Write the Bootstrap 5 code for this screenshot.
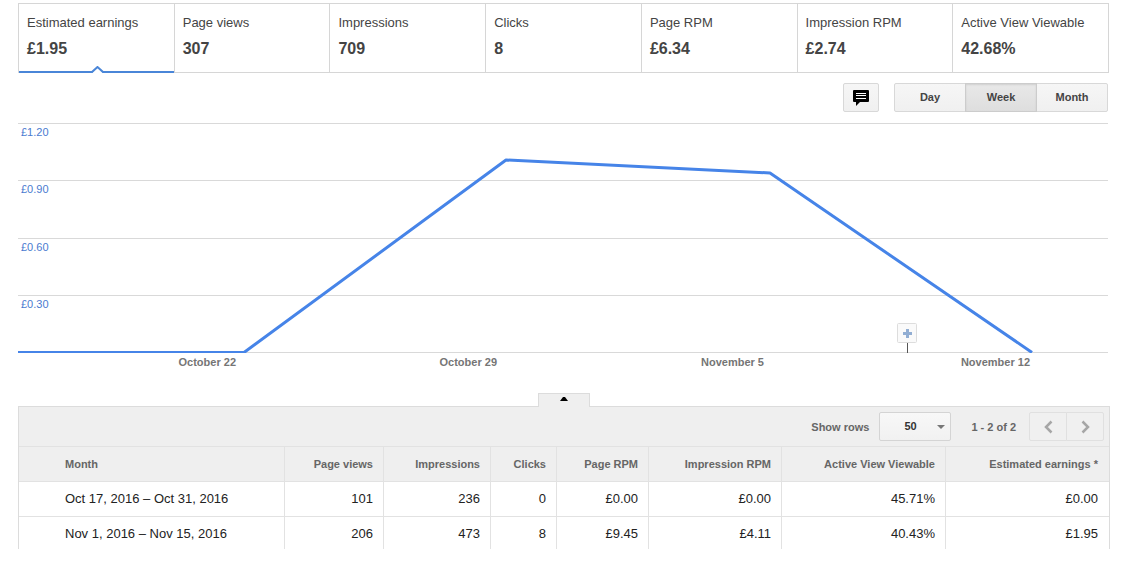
<!DOCTYPE html>
<html lang="en">
<head>
<meta charset="utf-8">
<meta name="viewport" content="width=device-width, initial-scale=1">
<title>Earnings report</title>
<link href="https://cdn.jsdelivr.net/npm/bootstrap@5.3.0/dist/css/bootstrap.min.css" rel="stylesheet">
<style>
  body { font-family: "Liberation Sans", Arial, sans-serif; font-size: 13px; line-height: 16px; color: #444; background: #fff; }
  .report { padding: 3px 16px 0 18px; }

  .metrics { border: 1px solid #d6d6d6; margin-right: 1px; }
  .metric { flex: 1 1 0; height: 68px; padding: 11px 8px 0; color: #444; text-decoration: none; position: relative; }
  .metric + .metric { border-left: 1px solid #d6d6d6; }
  .metric-value { font-size: 16px; line-height: 20px; font-weight: bold; margin-top: 8px; }
  .metric-active::after { content: ""; position: absolute; left: 0; right: 0; bottom: -1px; height: 2px; background: #4a86d8; }
  .metric-notch { position: absolute; left: 50%; bottom: -1px; margin-left: -5px; z-index: 1; }

  .chart-tools { gap: 15px; margin: 10px 2px 11px 0; }
  .tool-btn { height: 29px; padding: 0 0 1px; border: 1px solid #d8d8d8; border-radius: 2px; background: linear-gradient(#f6f6f6, #f0f0f0); color: #444; font-size: 11px; line-height: 16px; font-weight: bold; }
  .tool-btn:hover { background: #f0f0f0; border-color: #c6c6c6; }
  .note-btn { width: 36px; padding: 0; }
  .period .tool-btn { width: 72px; }
  .period .tool-btn.active { background: linear-gradient(#e8e8e8, #dedede); border-color: #ccc; color: #444; box-shadow: inset 0 1px 2px rgba(0,0,0,.1); }

  .chart { margin-right: 2px; }
  .plot { height: 230px; border-bottom: 1px solid #d9d9d9; }
  .band { flex: 1 1 0; border-top: 1px solid #d9d9d9; padding-left: 3px; color: #4a7bd0; font-size: 11px; line-height: 16px; }
  .series { position: absolute; left: 0; top: 0; width: 100%; height: 230px; overflow: hidden; }
  .annot { position: absolute; bottom: -1px; margin-left: -10px; padding: 0; border: 0; background: none; line-height: 0; }
  .dates { display: grid; grid-template-columns: 218fr 261fr 267fr 266fr 78fr; text-align: right; font-size: 11px; line-height: 16px; font-weight: bold; color: #757575; padding-top: 1px; }

  .fold { width: 52px; height: 14px; margin: 23px auto -1px; padding: 3px 0 0; border: 1px solid #dcdcdc; border-bottom: 0; background: #efefef; position: relative; }
  .panel-bar { height: 40px; background: #efefef; border: 1px solid #dcdcdc; border-bottom: 0; padding: 0 5px 0 0; font-size: 11px; font-weight: bold; color: #666; }
  .rows-pick { width: 72px; height: 29px; margin: 0 20px 0 10px; padding: 0 0 1px 24px; border: 1px solid #d4d4d4; border-radius: 2px; font-size: 11px; line-height: 16px; font-weight: bold; color: #333; appearance: none;
    background: url("data:image/svg+xml,%3Csvg xmlns='http://www.w3.org/2000/svg' width='8' height='4'%3E%3Cpath d='M0 0h8L4 4z' fill='%23777'/%3E%3C/svg%3E") no-repeat right 5px center, linear-gradient(#f8f8f8, #f1f1f1); }
  .pager { margin-left: 13px; }
  .pager .btn { width: 38px; height: 29px; padding: 0; border: 1px solid #e0e0e0; border-radius: 2px; background: #f0f0f0; line-height: 0; }

  .earnings { table-layout: fixed; margin: 0; border-left: 1px solid #dcdcdc; border-right: 1px solid #dcdcdc; border-collapse: separate; border-spacing: 0; color: #222; }
  .earnings th, .earnings td { padding: 9px 10px; line-height: 16px; height: 35px; text-align: right; border: 0 solid #e2e2e2; border-top-width: 1px; border-right-width: 1px; white-space: nowrap; background: none; }
  .earnings thead th { background: #efefef; font-size: 11px; color: #666; }
  .earnings tr > :first-child { text-align: left; padding-left: 46px; font-weight: normal; }
  .earnings thead tr > :first-child { font-weight: bold; }
  .earnings tr > :last-child { border-right-width: 0; padding-right: 11px; }
  .earnings tbody tr:last-child > * { height: 33px; padding-bottom: 7px; }
  .c-month { width: 266px; } .c-views { width: 99px; } .c-impr { width: 107px; } .c-clicks { width: 66px; }
  .c-rpm { width: 92px; } .c-irpm { width: 133px; } .c-view { width: 164px; } .c-earn { width: 163px; }
</style>
</head>
<body>
<main class="report">
  <nav class="metrics d-flex" aria-label="Metrics">
    <a href="#" class="metric metric-active"><div>Estimated earnings</div><div class="metric-value">£1.95</div>
      <svg class="metric-notch" width="13" height="7" viewBox="0 0 13 7"><path d="M1 7 6.500 1 12 7z" fill="#fff"/><path d="M.5 6.500 6.500 1l6 5.500" fill="none" stroke="#4a86d8" stroke-width="2"/></svg></a>
    <a href="#" class="metric"><div>Page views</div><div class="metric-value">307</div></a>
    <a href="#" class="metric"><div>Impressions</div><div class="metric-value">709</div></a>
    <a href="#" class="metric"><div>Clicks</div><div class="metric-value">8</div></a>
    <a href="#" class="metric"><div>Page RPM</div><div class="metric-value">£6.34</div></a>
    <a href="#" class="metric"><div>Impression RPM</div><div class="metric-value">£2.74</div></a>
    <a href="#" class="metric"><div>Active View Viewable</div><div class="metric-value">42.68%</div></a>
  </nav>

  <div class="chart-tools d-flex justify-content-end">
    <button type="button" class="btn tool-btn note-btn d-flex align-items-center justify-content-center" aria-label="Notes">
      <svg width="16" height="16" viewBox="0 0 16 16"><path d="M1 0h14a1 1 0 0 1 1 1v10a1 1 0 0 1-1 1H7l-4 4v-4H1a1 1 0 0 1-1-1V1a1 1 0 0 1 1-1z"/><path d="M3 3.500h10M3 5.500h10M3 8.500h10" stroke="#fff"/></svg>
    </button>
    <div class="btn-group period" role="group" aria-label="Period">
      <button type="button" class="btn tool-btn">Day</button>
      <button type="button" class="btn tool-btn active">Week</button>
      <button type="button" class="btn tool-btn">Month</button>
    </div>
  </div>

  <section class="chart" aria-label="Estimated earnings by week">
    <div class="plot position-relative d-flex flex-column">
      <div class="band">£1.20</div>
      <div class="band">£0.90</div>
      <div class="band">£0.60</div>
      <div class="band">£0.30</div>
      <svg class="series" viewBox="0 0 1090 230" preserveAspectRatio="none"><polyline points="0,229.500 226,229.500 488,37 752,50 1014,229.500" fill="none" stroke="#4684e8" stroke-width="3" stroke-linejoin="round" vector-effect="non-scaling-stroke"/></svg>
      <button type="button" class="annot" style="left:81.6%" aria-label="Add annotation">
        <svg width="20" height="30" viewBox="0 0 20 30"><path d="M10.500 20v10" stroke="#555"/><rect x=".5" y=".5" width="19" height="19" rx="1" fill="#fafafa" stroke="#ddd"/><path d="M9 6h3v3h3v3h-3v3H9v-3H6V9h3z" fill="#92aed3"/></svg>
      </button>
    </div>
    <div class="dates"><span>October 22</span><span>October 29</span><span>November 5</span><span>November 12</span></div>
  </section>

  <section>
    <button type="button" class="fold d-flex justify-content-center" aria-label="Collapse chart">
      <svg width="8" height="4" viewBox="0 0 8 4"><path d="M0 4h8L5 0H3z"/></svg>
    </button>
    <div class="panel-bar d-flex align-items-center justify-content-end">
      <label for="rows">Show rows</label>
      <select id="rows" class="rows-pick"><option>50</option></select>
      <span>1 - 2 of 2</span>
      <div class="btn-group pager" role="group" aria-label="Pages">
        <button type="button" class="btn" aria-label="Previous page"><svg width="9" height="14" viewBox="0 0 9 14"><path d="M7.500 1.500 2 7l5.500 5.500" fill="none" stroke="#a6a6a6" stroke-width="2.500"/></svg></button>
        <button type="button" class="btn" aria-label="Next page"><svg width="9" height="14" viewBox="0 0 9 14"><path d="M1.500 1.500 7 7l-5.500 5.500" fill="none" stroke="#a6a6a6" stroke-width="2.500"/></svg></button>
      </div>
    </div>
    <table class="table earnings">
      <colgroup><col class="c-month"><col class="c-views"><col class="c-impr"><col class="c-clicks"><col class="c-rpm"><col class="c-irpm"><col class="c-view"><col class="c-earn"></colgroup>
      <thead><tr><th scope="col">Month</th><th scope="col">Page views</th><th scope="col">Impressions</th><th scope="col">Clicks</th><th scope="col">Page RPM</th><th scope="col">Impression RPM</th><th scope="col">Active View Viewable</th><th scope="col">Estimated earnings *</th></tr></thead>
      <tbody>
        <tr><th scope="row">Oct 17, 2016 – Oct 31, 2016</th><td>101</td><td>236</td><td>0</td><td>£0.00</td><td>£0.00</td><td>45.71%</td><td>£0.00</td></tr>
        <tr><th scope="row">Nov 1, 2016 – Nov 15, 2016</th><td>206</td><td>473</td><td>8</td><td>£9.45</td><td>£4.11</td><td>40.43%</td><td>£1.95</td></tr>
      </tbody>
    </table>
  </section>
</main>
<script src="https://cdn.jsdelivr.net/npm/bootstrap@5.3.0/dist/js/bootstrap.bundle.min.js"></script>
</body>
</html>
